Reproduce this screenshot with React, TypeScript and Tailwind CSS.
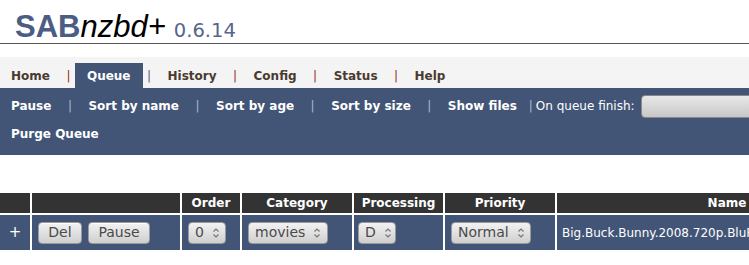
import React from 'react';

const tabs = ['Home', 'Queue', 'History', 'Config', 'Status', 'Help'];
const actions = ['Pause', 'Sort by name', 'Sort by age', 'Sort by size', 'Show files'];

const Arrows = () => (
  <svg width="8" height="12" viewBox="0 0 8 12" className="ml-2 shrink-0">
    <path d="M1.5 4.5 L4 2 L6.5 4.5" fill="none" stroke="#777" strokeWidth="1.2" />
    <path d="M1.5 7.5 L4 10 L6.5 7.5" fill="none" stroke="#777" strokeWidth="1.2" />
  </svg>
);

const Btn = ({ children, w }: { children: React.ReactNode; w: string }) => (
  <div
    className={`${w} h-[22px] flex items-center justify-center rounded-[4px] border border-[#9a9a9a] bg-gradient-to-b from-[#f2f2f2] to-[#cfcfcf] text-[14px] text-[#4a4a4a] shadow-[inset_0_1px_0_#fff]`}
  >
    {children}
  </div>
);

const Sel = ({ value, w }: { value: string; w: string }) => (
  <div
    className={`${w} h-[22px] flex items-center justify-between pl-[6px] pr-[6px] rounded-[4px] border border-[#9a9a9a] bg-gradient-to-b from-[#f2f2f2] to-[#cfcfcf] text-[14px] text-[#4a4a4a] overflow-hidden`}
  >
    <span>{value}</span>
    <Arrows />
  </div>
);

export default function App() {
  return (
    <div className="w-[749px] h-[265px] overflow-hidden bg-white" style={{ fontFamily: '"DejaVu Sans", Verdana, sans-serif' }}>
      {/* Title */}
      <div className="h-[44px] flex items-end pl-[15px] pb-[1px] border-b border-[#555]">
        <span className="text-[31px] leading-none font-bold text-[#4b5c85]" style={{ fontFamily: '"Liberation Sans", Arial, sans-serif' }}>SAB</span>
        <span className="text-[31px] leading-none italic text-black" style={{ fontFamily: '"Liberation Sans", Arial, sans-serif' }}>nzbd+</span>
        <span className="text-[19.5px] leading-none text-[#56668d] ml-[8px] mb-[2px]">0.6.14</span>
      </div>

      {/* Tabs */}
      <div className="mt-[13px] h-[31px] bg-[#f4f4f4] flex items-end text-[12px] font-bold whitespace-nowrap">
        {tabs.map((t, i) => (
          <React.Fragment key={t}>
            {i > 0 && (
              <span className={`w-[13px] h-[25px] flex items-center justify-center font-normal ${i === 2 ? 'text-[#4d5f86]' : 'text-[#9b2a14]'}`}>|</span>
            )}
            <div
              className={`h-[25px] flex items-center px-[12px] ${
                t === 'Queue' ? 'bg-[#425577] text-white' : 'text-[#4a3a30]'
              } ${i === 0 ? 'pl-[11px]' : ''}`}
            >
              {t}
            </div>
          </React.Fragment>
        ))}
      </div>

      {/* Action bar */}
      <div className="h-[67px] bg-[#425577] text-white text-[12px] pl-[11px] whitespace-nowrap">
        <div className="flex items-center h-[36px]">
          {actions.map((a, i) => (
            <React.Fragment key={a}>
              {i > 0 && <span className="w-[37px] text-center text-[#a9b8d2] shrink-0">|</span>}
              <span className="font-bold shrink-0">{a}</span>
            </React.Fragment>
          ))}
          <span className="ml-[12px] text-[#a9b8d2] shrink-0">|</span>
          <span className="ml-[3px] shrink-0">On queue finish:</span>
          <div className="ml-[6px] w-[200px] h-[23px] rounded-[4px] border border-[#888] bg-gradient-to-b from-[#e8e8e8] to-[#c8c8c8] shrink-0" />
        </div>
        <div className="h-[20px] flex items-center font-bold">Purge Queue</div>
      </div>

      {/* Table */}
      <div className="mt-[38px] w-[900px] grid grid-cols-[30px_148px_58px_110px_89px_110px_340px] gap-[2px] text-[12px]">
        <div className="h-[20px] bg-[#333]" />
        <div className="h-[20px] bg-[#333]" />
        {['Order', 'Category', 'Processing', 'Priority', 'Name'].map((h) => (
          <div key={h} className="h-[20px] bg-[#333] text-white font-bold flex items-center justify-center">{h}</div>
        ))}

        <div className="h-[35px] bg-[#425577] text-white text-[15px] flex items-center justify-center">+</div>
        <div className="h-[35px] bg-[#425577] flex items-center pl-[6px] gap-[6px]">
          <Btn w="w-[44px]">Del</Btn>
          <Btn w="w-[62px]">Pause</Btn>
        </div>
        <div className="h-[35px] bg-[#425577] flex items-center pl-[6px]">
          <Sel value="0" w="w-[38px]" />
        </div>
        <div className="h-[35px] bg-[#425577] flex items-center pl-[6px]">
          <Sel value="movies" w="w-[80px]" />
        </div>
        <div className="h-[35px] bg-[#425577] flex items-center pl-[4px]">
          <Sel value="D" w="w-[38px]" />
        </div>
        <div className="h-[35px] bg-[#425577] flex items-center pl-[6px]">
          <Sel value="Normal" w="w-[80px]" />
        </div>
        <div className="h-[35px] bg-[#425577] text-white flex items-center pl-[5px] whitespace-nowrap">
          Big.Buck.Bunny.2008.720p.BluRay.x264
        </div>
      </div>
    </div>
  );
}
